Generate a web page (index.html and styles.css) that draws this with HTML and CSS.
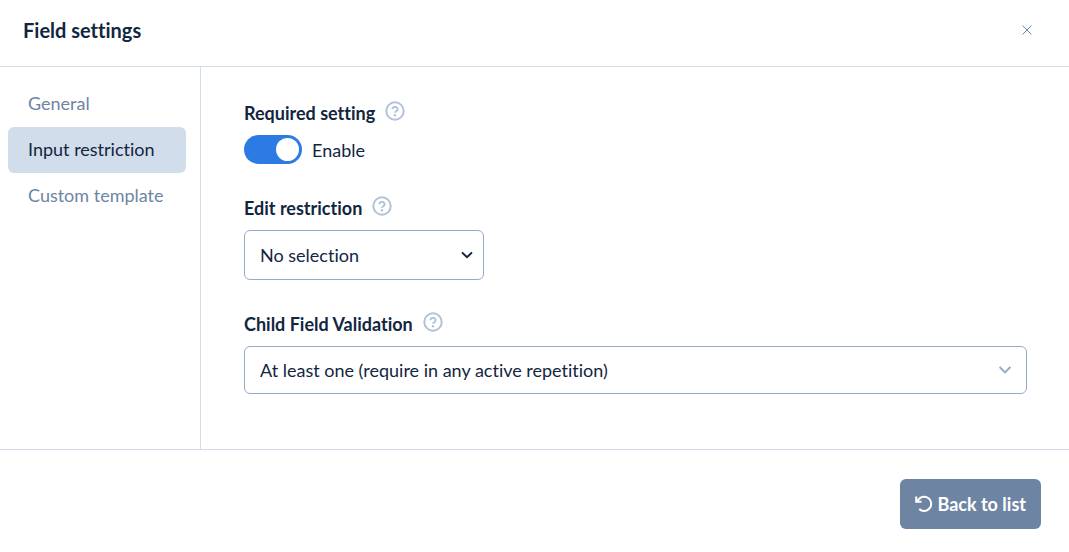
FILE: index.html
```html
<!DOCTYPE html>
<html lang="en">
<head>
    <meta charset="UTF-8">
    <meta name="viewport" content="width=device-width, initial-scale=1.0">
    <title>Field settings</title>
    <link rel="stylesheet" href="styles.css">
</head>
<body>
    <header class="header">
        <h1>Field settings</h1>
        <button type="button" class="close" aria-label="Close">
            <svg width="10" height="10" viewBox="0 0 10 10"><path d="M0.5 0.5l9 9M9.5 0.5l-9 9"/></svg>
        </button>
    </header>

    <div class="main">
        <nav class="sidebar">
            <a href="#general">General</a>
            <a href="#input" class="active">Input restriction</a>
            <a href="#template">Custom template</a>
        </nav>

        <main class="content">
            <div class="field">
                <div class="field-title">
                    <h2>Required setting</h2>
                    <svg class="help" viewBox="0 0 20 20"><circle cx="10" cy="10" r="8.7"/><path d="M7.4 8.2a2.6 2.4 0 1 1 4 2c-.9.5-1.4.8-1.4 1.5"/><circle class="dot" cx="10" cy="14.2" r="1.2"/></svg>
                </div>
                <label class="switch">
                    <input type="checkbox" checked>
                    <span>Enable</span>
                </label>
            </div>

            <div class="field">
                <div class="field-title">
                    <label for="edit">Edit restriction</label>
                    <svg class="help" viewBox="0 0 20 20"><circle cx="10" cy="10" r="8.7"/><path d="M7.4 8.2a2.6 2.4 0 1 1 4 2c-.9.5-1.4.8-1.4 1.5"/><circle class="dot" cx="10" cy="14.2" r="1.2"/></svg>
                </div>
                <div class="select select-small">
                    <select id="edit">
                        <option>No selection</option>
                    </select>
                    <svg class="arrow" viewBox="0 0 12 8"><path d="M1 1.4l5 4.8 5-4.8"/></svg>
                </div>
            </div>

            <div class="field">
                <div class="field-title">
                    <label for="child">Child Field Validation</label>
                    <svg class="help" viewBox="0 0 20 20"><circle cx="10" cy="10" r="8.7"/><path d="M7.4 8.2a2.6 2.4 0 1 1 4 2c-.9.5-1.4.8-1.4 1.5"/><circle class="dot" cx="10" cy="14.2" r="1.2"/></svg>
                </div>
                <div class="select">
                    <select id="child">
                        <option>At least one (require in any active repetition)</option>
                    </select>
                    <svg class="arrow" viewBox="0 0 12 8"><path d="M0.6 1l5.4 5.4L11.4 1"/></svg>
                </div>
            </div>
        </main>
    </div>

    <footer class="footer">
        <button type="button" class="back">
            <svg width="18" height="18" viewBox="0 0 18 18"><path d="M1.2 1.5v5.3h5.3M1.8 6.4l1.6-1.8A7.1 7.1 0 1 1 4.2 14"/></svg>
            Back to list
        </button>
    </footer>
</body>
</html>
```
FILE: styles.css
```css
* {
    box-sizing: border-box;
}

body {
    margin: 0;
    min-height: 100vh;
    display: flex;
    flex-direction: column;
    background-color: #fff;
    color: #12263f;
    font-family: Lato, 'Open Sans', sans-serif;
    font-size: 18px;
    line-height: 28px;
    font-variant-ligatures: none;
}

svg {
    fill: none;
    stroke: currentColor;
}

select,
button {
    font: inherit;
    font-variant-ligatures: none;
    color: inherit;
}

.header {
    display: flex;
    justify-content: space-between;
    align-items: center;
    padding: 16px 37px 22px 23px;
    border-bottom: 1px solid #d2ddec;
}

h1 {
    margin: 0;
    font-size: 20px;
    font-weight: bold;
}

.close {
    display: flex;
    padding: 0;
    border: none;
    background: none;
    color: #6e84a3;
    cursor: pointer;
}

.main {
    flex: 1;
    display: flex;
}

.sidebar {
    width: 201px;
    padding: 14px 14px 14px 8px;
    border-right: 1px solid #d2ddec;
}

.sidebar a {
    display: block;
    padding: 8px 20px 10px;
    border-radius: 6px;
    color: #6e84a3;
    text-decoration: none;
}

.sidebar .active {
    background-color: #d2ddec;
    color: #12263f;
}

.content {
    flex: 1;
    display: flex;
    flex-direction: column;
    gap: 30px;
    padding: 32px 42px 54px 43px;
}

.field-title {
    display: flex;
    gap: 10px;
    margin-bottom: 8px;
}

.field-title h2,
.field-title label {
    margin: 0;
    font-size: 18px;
    font-weight: bold;
}

.help {
    width: 20px;
    height: 20px;
    margin-top: 2px;
    color: #b1c2d9;
    stroke-width: 2;
}

.help .dot {
    fill: currentColor;
    stroke: none;
}

.switch {
    display: flex;
    align-items: center;
    gap: 10px;
}

.switch input {
    appearance: none;
    display: flex;
    justify-content: flex-end;
    width: 58px;
    height: 29px;
    margin: 0;
    padding: 3px;
    border-radius: 15px;
    background-color: #2c7be5;
}

.switch input:not(:checked) {
    justify-content: flex-start;
    background-color: #d2ddec;
}

.switch input::before {
    content: "";
    width: 23px;
    height: 23px;
    border-radius: 50%;
    background-color: #fff;
}

.select {
    display: grid;
    align-items: center;
    color: #95aac9;
}

.select select {
    grid-area: 1 / 1;
    appearance: none;
    width: 100%;
    height: 48px;
    padding: 0 40px 0 15px;
    border: 1px solid #95aac9;
    border-radius: 6px;
    background-color: #fff;
    color: #12263f;
}

.arrow {
    grid-area: 1 / 1;
    justify-self: end;
    width: 12px;
    height: 8px;
    margin-right: 16px;
    stroke-width: 2;
    pointer-events: none;
}

.select-small {
    width: 240px;
    color: #12263f;
}

.select-small select {
    height: 50px;
}

.select-small .arrow {
    margin-right: 11px;
}

.footer {
    display: flex;
    justify-content: flex-end;
    padding: 29px 28px 23px;
    border-top: 1px solid #d2ddec;
}

.back {
    display: flex;
    align-items: center;
    gap: 4px;
    padding: 11px 15px;
    border: none;
    border-radius: 6px;
    background-color: #6e84a3;
    color: #fff;
    font-weight: bold;
    cursor: pointer;
}

.back svg {
    stroke-width: 2;
}
```
